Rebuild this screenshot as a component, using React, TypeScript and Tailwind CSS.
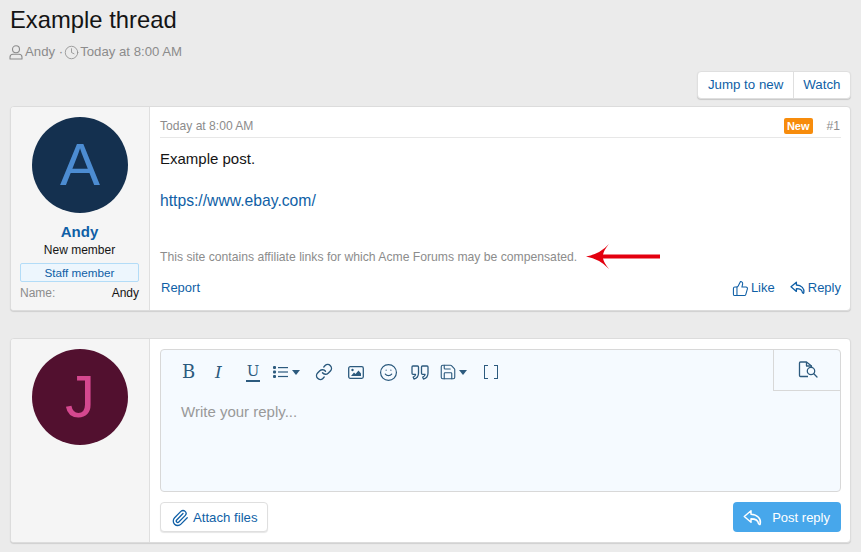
import { Clock, ThumbsUp, Link, Smile, Paperclip, Save } from "lucide-react";

const sans = "font-['Liberation_Sans',Arial,sans-serif]";
const iconColor = "#2c5a7e";

const ReplyIcon = ({ size = 16, width = 1.3 }: { size?: number; width?: number }) => (
  <svg width={size} height={size} viewBox="0 0 16 16" fill="none" stroke="currentColor" strokeWidth={width} strokeLinejoin="round" strokeLinecap="round">
    <path d="M6.400 2.200 1 6.800l5.400 4.600V8.700c3.600 0 5.600.8 6 3.800.6.900 1.100 1 1.400.2C14.700 8.600 11.500 5.200 6.400 5z" />
  </svg>
);

const UserIcon = () => (
  <svg width="14" height="15" viewBox="0 0 14 15" className="-ml-px mr-px" fill="none" stroke="currentColor" strokeWidth="1.100">
    <circle cx="7" cy="4.300" r="3.500" />
    <path d="M1 14v-1.800c0-1.800 1.300-3 3-3h6c1.700 0 3 1.200 3 3V14z" strokeLinejoin="round" />
  </svg>
);

const Caret = ({ className }: { className: string }) => (
  <svg width="8" height="5" viewBox="0 0 8 5" className={className}>
    <path d="M0 0h8L4 5z" fill={iconColor} />
  </svg>
);

const Toolbar = () => (
  <div className="flex items-center h-[44px] pl-[21px]" style={{ color: iconColor }}>
    <span className="w-[13px] text-[18px] leading-none font-['DejaVu_Serif',serif]">B</span>
    <span className="w-[12px] ml-[20px] text-[17px] leading-none italic font-['DejaVu_Serif',serif]">I</span>
    <span className="w-[14px] ml-[19px] text-[15px] leading-[17px] h-[19px] border-b-[2px] border-[#2c5a7e] text-center font-['DejaVu_Serif',serif]">U</span>
    <svg width="15" height="14" viewBox="0 0 15 14" className="ml-[13px]">
      <g fill={iconColor}>
        <rect x="0" y="1" width="3" height="3" rx="1" />
        <rect x="0" y="5.500" width="3" height="3" rx="1" />
        <rect x="0" y="10" width="3" height="3" rx="1" />
        <rect x="5" y="2" width="10" height="1.200" />
        <rect x="5" y="6.400" width="10" height="1.200" />
        <rect x="5" y="10.900" width="10" height="1.200" />
      </g>
    </svg>
    <Caret className="ml-[4px]" />
    <Link size={18} strokeWidth={1.900} className="ml-[15px]" />
    <svg width="16" height="13" viewBox="0 0 16 13" className="ml-[15px]" fill="none">
      <rect x=".7" y=".7" width="14.600" height="11.600" rx="1.500" stroke={iconColor} strokeWidth="1.300" />
      <path d="M3 10l3-3.500 1.500 1.500L10.500 4.500 13 7.500V10z" fill={iconColor} />
      <circle cx="4.500" cy="4" r="1.200" fill={iconColor} />
    </svg>
    <Smile size={19} strokeWidth={1.500} className="ml-[15px]" />
    <svg width="18" height="15" viewBox="0 0 18 15" className="ml-[13px]" fill="none" stroke={iconColor} strokeWidth="1.300" strokeLinejoin="round">
      <path d="M2 1h4.500c.6 0 1 .4 1 1v6c0 3-1.800 5.400-4.500 6l-.8-1.800c1.500-.5 2.300-1.500 2.400-2.900H2c-.6 0-1-.4-1-1V2c0-.6.4-1 1-1z" />
      <path d="M11.500 1H16c.6 0 1 .4 1 1v6c0 3-1.800 5.400-4.500 6l-.8-1.800c1.500-.5 2.300-1.500 2.400-2.900h-2.600c-.6 0-1-.4-1-1V2c0-.6.4-1 1-1z" />
    </svg>
    <Save size={18} strokeWidth={1.500} className="ml-[10px]" />
    <Caret className="ml-[2px]" />
    <span className="ml-[17px] w-[14px] h-[14px] flex justify-between">
      <span className="w-[4px] border-[1.500px] border-r-0 border-[#2c5a7e]" />
      <span className="w-[4px] border-[1.500px] border-l-0 border-[#2c5a7e]" />
    </span>
    <div className="ml-auto self-start w-[67px] h-[41px] border-l border-b border-[#d8d8d8] flex items-center justify-center">
      <svg width="20" height="18" viewBox="0 0 20 18" className="ml-[2px]" fill="none" stroke={iconColor} strokeWidth="1.300" strokeLinejoin="round">
        <path d="M10 15.500H2.500c-.6 0-1-.4-1-1V2c0-.6.4-1 1-1h6l5 4v1" />
        <path d="M8.500 1v4h5" />
        <circle cx="13" cy="10" r="3.700" />
        <path d="M15.800 12.800 19 16" strokeLinecap="round" />
      </svg>
    </div>
  </div>
);

const PostCard = ({ avatar, avatarBg, avatarFg, side, children }: {
  avatar: string;
  avatarBg: string;
  avatarFg: string;
  side?: React.ReactNode;
  children: React.ReactNode;
}) => (
  <div className="flex h-[205px] rounded-[4px] bg-white border border-[#dcdcdc] shadow-[0_1px_1px_rgba(0,0,0,0.12)] overflow-hidden">
    <div className="w-[139px] shrink-0 bg-[#f5f5f5] border-r border-[#dfdfdf] pt-[10px] pl-[9px] pr-[10px]">
      <div
        className="w-[96px] h-[96px] ml-[12px] rounded-full flex items-center justify-center text-[60px] leading-none"
        style={{ background: avatarBg, color: avatarFg }}
      >
        {avatar}
      </div>
      {side}
    </div>
    <div className="relative flex-1 min-w-0 flex flex-col pl-[10px] pr-[9px]">{children}</div>
  </div>
);

export default function App() {
  return (
    <div className={`${sans} h-[552px] w-[861px] overflow-hidden bg-[#ebebeb] pl-[10px] pr-[10px]`}>
      <h1 className="pt-[5px] text-[23.800px] leading-[30px] text-[#141414]">Example thread</h1>
      <div className="mt-[7px] flex items-center h-[20px] text-[13.200px] text-[#8c8c8c]">
        <UserIcon />
        <span className="ml-[1px]">Andy ·</span>
        <Clock size={15} strokeWidth={1.300} className="ml-[1px]" />
        <span className="ml-[1px]">Today at 8:00 AM</span>
      </div>

      <div className="mt-[9px] flex justify-end">
        <div className="flex h-[28px] rounded-[4px] bg-white border border-[#dfdfdf] shadow-[0_1px_1px_rgba(0,0,0,0.15)] text-[13.300px] text-[#0f5fa6]">
          <span className="px-[9.500px] flex items-center">Jump to new</span>
          <span className="px-[9.500px] flex items-center border-l border-[#dfdfdf]">Watch</span>
        </div>
      </div>

      <div className="mt-[7px]">
        <PostCard
          avatar="A"
          avatarBg="#14304f"
          avatarFg="#4c8cd2"
          side={
            <div className="mt-[10px] text-center">
              <div className="text-[15px] leading-[18px] font-bold text-[#0f5fa6]">Andy</div>
              <div className="text-[12px] leading-[18px] text-[#141414]">New member</div>
              <div className="mt-[4px] h-[19px] rounded-[2px] border border-[#b3dcf7] bg-[#edf6fd] text-[11.700px] leading-[17px] text-[#0f5fa6]">
                Staff member
              </div>
              <div className="mt-[2px] flex justify-between text-[12px] leading-[18px]">
                <span className="text-[#8c8c8c]">Name:</span>
                <span className="text-[#141414]">Andy</span>
              </div>
            </div>
          }
        >
          <div className="mt-[9px] flex items-center h-[22px] border-b border-[#e7e7e7] text-[12.100px] text-[#8c8c8c]">
            <span>Today at 8:00 AM</span>
            <span className="ml-auto -mt-[1px] h-[16px] rounded-[2px] bg-[#f78c0c] px-[3px] text-[11px] leading-[16px] font-bold text-white">New</span>
            <span className="ml-[14px] mr-[1px]">#1</span>
          </div>
          <p className="mt-[10px] text-[15px] leading-[21px] text-[#141414]">Example post.</p>
          <p className="mt-[21px] text-[15.700px] leading-[21px] text-[#0f5fa6]">https://www.ebay.com/</p>
          <p className="mt-[37px] text-[12.180px] leading-[18px] text-[#8c8c8c]">
            This site contains affiliate links for which Acme Forums may be compensated.
          </p>
          <div className="mt-[13px] flex items-center text-[13px] text-[#0f5fa6] h-[18px]">
            <span className="ml-[1px]">Report</span>
            <ThumbsUp size={17} strokeWidth={1.500} className="ml-auto" />
            <span className="ml-[2px]">Like</span>
            <span className="ml-[15px]"><ReplyIcon /></span>
            <span className="ml-[2px]">Reply</span>
          </div>
          {/* red annotation arrow */}
          <svg width="75" height="25" viewBox="0 0 75 25" className="absolute left-[436px] top-[137px]">
            <path d="M0 12.500Q14 10 23 0Q18 6 17 10.500H74v4H17Q18 19 23 25Q14 15 0 12.500z" fill="#e3000f" />
          </svg>
        </PostCard>
      </div>

      <div className="mt-[27px]">
        <PostCard avatar="J" avatarBg="#52102f" avatarFg="#d5488f">
          <div className="mt-[10px] h-[143px] rounded-[4px] border border-[#d8d8d8] bg-[#f5faff]">
            <Toolbar />
            <div className="pl-[20px] mt-[7px] text-[15px] leading-[21px] text-[#999999]">Write your reply...</div>
          </div>
          <div className="mt-[10px] flex justify-between">
            <div className="h-[30px] flex items-center rounded-[4px] border border-[#dfdfdf] bg-white shadow-[0_1px_1px_rgba(0,0,0,0.1)] pl-[10px] pr-[9px] pt-[1px] text-[13.200px] text-[#0f5fa6]">
              <Paperclip size={18} strokeWidth={1.700} />
              <span className="ml-[4px]">Attach files</span>
            </div>
            <div className="h-[30px] flex items-center rounded-[4px] bg-[#47a7eb] pl-[10px] pr-[11px] pt-[1px] text-[13px] text-white">
              <ReplyIcon size={20} width={1.200} />
              <span className="ml-[9px]">Post reply</span>
            </div>
          </div>
        </PostCard>
      </div>
    </div>
  );
}
